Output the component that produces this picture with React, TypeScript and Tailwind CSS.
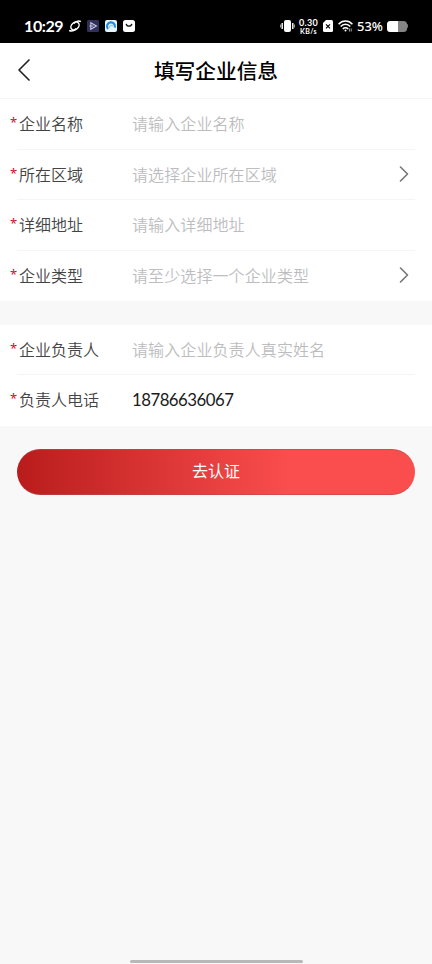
import { ChevronLeft, ChevronRight } from 'lucide-react'

type Field = {
  label: string
  placeholder?: string
  value?: string
  select?: boolean
}

const companyFields: Field[] = [
  { label: '企业名称', placeholder: '请输入企业名称' },
  { label: '所在区域', placeholder: '请选择企业所在区域', select: true },
  { label: '详细地址', placeholder: '请输入详细地址' },
  { label: '企业类型', placeholder: '请至少选择一个企业类型', select: true },
]

const ownerFields: Field[] = [
  { label: '企业负责人', placeholder: '请输入企业负责人真实姓名' },
  { label: '负责人电话', value: '18786636067' },
]

function StatusBar() {
  return (
    <div className="flex h-[43px] items-start justify-between bg-black pr-6 pl-6 text-white">
      <div className="flex h-[52px] items-center">
        <span className="w-[39px] pb-px font-['Lato'] text-[16px] leading-none font-bold tracking-[-0.4px] whitespace-nowrap">
          10:29
        </span>
        <svg className="ml-[6px] size-3" viewBox="0 0 12 12" fill="none" stroke="white">
          <ellipse cx="6" cy="6" rx="4.6" ry="3.4" strokeWidth="1.5" transform="rotate(-42 6 6)" />
          <path d="M.2 10.4c2 1 4.6.4 7-1.8M11.8 1.6C9.8.6 7.2 1.2 4.8 3.4" strokeWidth="1.5" />
        </svg>
        <svg className="ml-[6px] size-3" viewBox="0 0 12 12">
          <rect width="12" height="12" rx="1.5" fill="#30305a" />
          <path d="M3.8 2.8v6.4L9.4 6z" fill="none" stroke="#c9c8e5" strokeWidth="1.1" />
          <path d="M2.5 6h4" stroke="#c9c8e5" />
        </svg>
        <svg className="ml-[6px] size-3" viewBox="0 0 12 12">
          <rect width="12" height="12" rx="2" fill="#e6f5ff" />
          <path d="M3 9a4 4 0 1 1 6.8-1.4" fill="none" stroke="#2289df" strokeWidth="2.2" />
          <path d="M4.5 8a2 2 0 0 1 3.5-1.8" fill="none" stroke="#8bd2fa" strokeWidth="1.2" />
        </svg>
        <svg className="ml-[6px] size-3" viewBox="0 0 12 12">
          <rect width="12" height="12" rx="2.5" fill="white" />
          <path d="M3.2 3.8c.4 3 5.2 3 5.6 0" fill="none" stroke="#111" strokeWidth="1.3" />
        </svg>
      </div>
      <div className="flex h-[52px] items-center">
        <svg className="h-3 w-[15px]" viewBox="0 0 15 12" fill="white">
          <rect x="4" width="7" height="12" rx="2" />
          <path d="M2.2 3v6M12.8 3v6" stroke="white" strokeWidth="1.4" />
          <path d="M.6 4.5v3M14.4 4.5v3" stroke="#aaa" />
        </svg>
        <div className="ml-[3px] flex w-[21px] flex-col items-center font-['Lato'] font-bold">
          <span className="text-[9px] leading-[9px] tracking-[0.3px]">0.30</span>
          <span className="text-[7px] leading-[8px] tracking-[0.4px]">KB/s</span>
        </div>
        <svg className="ml-1 h-3 w-[10px]" viewBox="0 0 10 12">
          <path d="M3 0h5.5Q10 0 10 1.5v9Q10 12 8.5 12h-7Q0 12 0 10.5V3z" fill="white" />
          <path d="m3 4.4 4 4m0-4-4 4" stroke="black" strokeWidth="1.2" />
        </svg>
        <svg className="ml-[5px] h-3 w-[15px]" viewBox="0 0 15 12" fill="none" stroke="white">
          <path d="M.6 4.2c3.8-4.2 10-4.2 13.8 0M2.7 6.6c2.6-3 7-3 9.6 0M4.8 8.9c1.5-1.6 3.9-1.6 5.4 0" strokeWidth="1.5" />
          <circle cx="7.5" cy="10.6" r="1" fill="white" stroke="none" />
          <path d="M11.4 8.5v3m1.8-3v3" stroke="#bbb" strokeWidth=".9" />
        </svg>
        <span className="ml-1 w-[27px] font-['Noto_Sans'] text-[13px] leading-none font-medium">53%</span>
        <div className="ml-[3px] flex h-[11px] w-5 overflow-hidden rounded-[3.5px] bg-[#858585]">
          <div className="w-[11px] bg-white" />
        </div>
        <div className="h-1 w-px rounded-r bg-[#777]" />
      </div>
    </div>
  )
}

function FormRow({ field }: { field: Field }) {
  return (
    <div className="group relative flex h-[50.5px] items-center pb-[2px] pl-[10px] text-[16px]">
      <span className="w-[9px] pb-[2px] font-['Noto_Sans'] text-[13px] leading-6 text-[#c8102e]">*</span>
      <span className="w-[113px] font-[350] text-[#444]">{field.label}</span>
      {field.value ? (
        <span className="pt-px font-['Lato'] text-[16.8px] tracking-[-0.52px] text-[#1a1a1a]">{field.value}</span>
      ) : (
        <span className="font-[350] tracking-[0.1px] text-[#bdbdc0]">{field.placeholder}</span>
      )}
      {field.select && (
        <ChevronRight className="mt-px mr-[14px] ml-auto size-7 text-[#777]" strokeWidth={1.4} />
      )}
      <div className="absolute right-[17px] bottom-0 left-[17px] h-px bg-[#f5f5f5] group-last:hidden" />
    </div>
  )
}

function FormSection({ fields }: { fields: Field[] }) {
  return (
    <section className="bg-white">
      {fields.map((field) => (
        <FormRow key={field.label} field={field} />
      ))}
    </section>
  )
}

export default function App() {
  return (
    <div className="flex h-[964px] w-[432px] flex-col overflow-hidden bg-[#f8f8f8] font-['Noto_Sans_CJK_SC',sans-serif]">
      <StatusBar />
      <header className="grid h-[56px] grid-cols-[48px_1fr_48px] items-center border-b border-[#f5f5f5] bg-white">
        <ChevronLeft className="-mt-px ml-1 size-10 text-[#222]" strokeWidth={1} />
        <h1 className="text-center text-[20.7px] font-medium text-black">填写企业信息</h1>
      </header>
      <FormSection fields={companyFields} />
      <div className="h-[23.6px] shrink-0" />
      <FormSection fields={ownerFields} />
      <button className="mx-[17px] mt-[23.4px] h-[46px] shrink-0 rounded-full border-y border-[#b74c4c]/60 bg-linear-[90deg,#b91c1c_0%,#fa4d4d_68%] pb-[3px] text-[16px] text-white">
        去认证
      </button>
      <div className="mx-auto mt-auto mb-[1px] h-[3px] w-[173px] rounded-full bg-[#b8b8b8]" />
    </div>
  )
}
